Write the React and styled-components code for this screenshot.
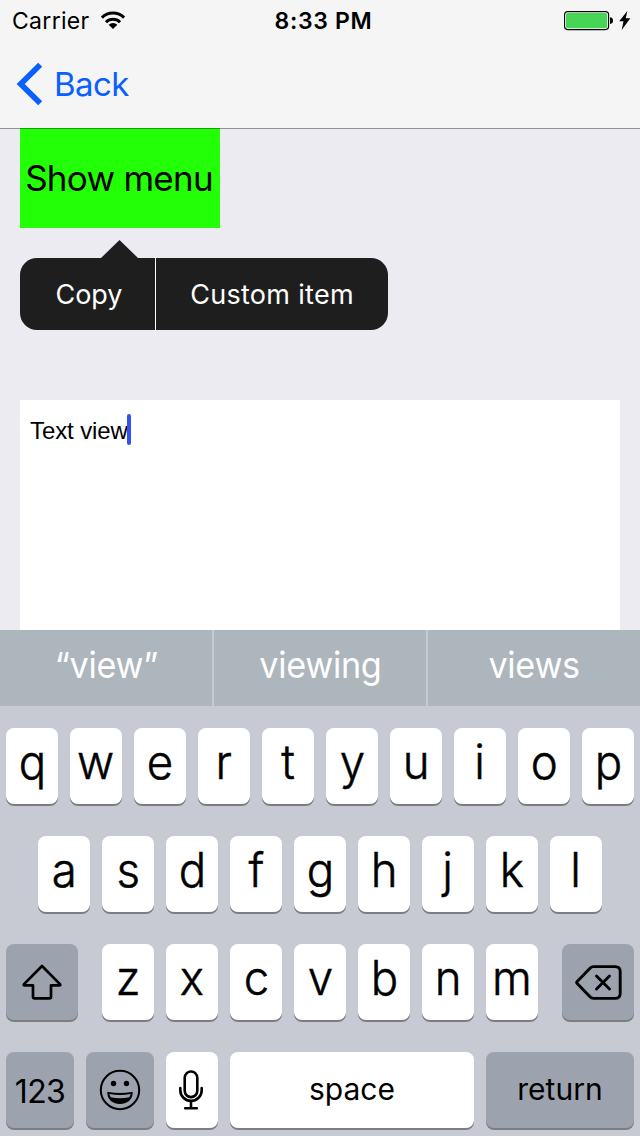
import React from "react";
import styled, { createGlobalStyle } from "styled-components";

const GlobalStyle = createGlobalStyle`
  * { box-sizing: border-box; }
  body { margin: 0; background: #ecebf1; }
`;

const Screen = styled.div`
  width: 640px;
  height: 1136px;
  display: flex;
  flex-direction: column;
  overflow: hidden;
  background: #ecebf1;
  color: #000;
  font-family: Inter, "Liberation Sans", sans-serif;
`;

const Header = styled.header`
  position: relative;
  z-index: 1;
  flex: none;
  height: 128px;
  background: #f5f5f5;
  box-shadow: 0 1px 0 rgba(0, 0, 0, 0.38);
`;

const StatusBar = styled.div`
  display: grid;
  grid-template-columns: 1fr auto 1fr;
  align-items: center;
  height: 42px;
  padding: 0 9px 0 12px;
`;

const StatusGroup = styled.div`
  display: flex;
  align-items: center;
  justify-content: ${(p) => (p.$end ? "flex-end" : "flex-start")};
  gap: ${(p) => p.$gap}px;
`;

const Label = styled.span`
  font-size: ${(p) => p.$size}px;
  font-weight: ${(p) => p.$weight || 400};
  letter-spacing: ${(p) => p.$track || 0}px;
  line-height: 1.2;
  white-space: pre;
  transform: ${(p) => (p.$narrow ? `scaleX(${p.$narrow})` : "none")};
`;

const CarrierName = styled(Label)`
  padding-top: 2px;
`;

const Clock = styled(Label)`
  padding: 2px 0 0 4px;
`;

const KeyLabel = styled(Label)`
  -webkit-text-stroke: 0.5px currentColor;
`;

const BackButton = styled.button`
  display: flex;
  align-items: center;
  gap: 11px;
  height: 84px;
  padding: 0 0 0 16px;
  border: 0;
  background: none;
  color: #0a60ff;
  font-family: inherit;
`;

const BackLabel = styled(Label)`
  padding-top: 2px;
`;

const Content = styled.main`
  flex: none;
  height: 502px;
  padding: 0 20px;
`;

const MenuTrigger = styled.div`
  display: flex;
  align-items: center;
  justify-content: center;
  width: 200px;
  height: 100px;
  padding-right: 2px;
  background: #22ff06;
`;

const Popover = styled.div`
  display: flex;
  flex-direction: column;
  align-items: flex-start;
  margin-top: 12px;
`;

const Arrow = styled.svg`
  display: block;
  margin-left: 81px;
`;

const MenuItems = styled.div`
  display: flex;
  width: 368px;
  height: 72px;
  border-radius: 17px;
  background: #1e1e1e;
  color: #fff;
  overflow: hidden;
`;

const MenuItem = styled.div`
  display: flex;
  align-items: center;
  justify-content: center;
  flex: ${(p) => (p.$width ? `0 0 ${p.$width}px` : "1")};
  padding-top: 2px;
  padding-left: ${(p) => p.$inset || 0}px;

  & + & { border-left: 1px solid #fff; }
`;

const TextView = styled.div`
  display: flex;
  align-items: flex-start;
  height: 230px;
  margin-top: 70px;
  padding: 14px 10px;
  background: #fff;
  font-family: "Liberation Sans", Arial, sans-serif;
`;

const TextLine = styled.span`
  font-size: 24px;
  line-height: 33px;
  letter-spacing: -0.1px;
`;

const Caret = styled.span`
  width: 4px;
  height: 31px;
  margin-left: -1px;
  border-radius: 2px;
  background: #3550ee;
`;

const Keyboard = styled.section`
  flex: none;
  height: 506px;
  background: #c8cad3;
`;

const Predictions = styled.div`
  display: grid;
  grid-template-columns: repeat(3, 212px);
  gap: 2px;
  height: 76px;
`;

const Prediction = styled.div`
  display: flex;
  align-items: center;
  justify-content: center;
  padding-bottom: 5px;
  background: #adb5bd;
  color: #fff;
`;

const Keys = styled.div`
  display: flex;
  flex-direction: column;
  gap: 32px;
  padding: 22px 6px 0;
`;

const KeyRow = styled.div`
  display: flex;
  justify-content: center;
  gap: 12px;
`;

const LetterGroup = styled.div`
  display: flex;
  gap: 12px;
  margin: 0 12px;
`;

const Key = styled.div`
  display: flex;
  align-items: center;
  justify-content: center;
  flex: none;
  width: ${(p) => p.$width || 52}px;
  height: 76px;
  padding-bottom: ${(p) => p.$lift || 0}px;
  padding-top: ${(p) => p.$drop || 0}px;
  border-radius: 8px;
  background: ${(p) => (p.$dark ? "#9ca3af" : "#fff")};
  box-shadow: 0 2px 0 #7b7d82;
`;

const MicKey = styled(Key)`
  padding-right: 2px;
`;

const Letter = ({ children }) => (
  <Key $lift={8}>
    <KeyLabel $size={48} $weight={300} $narrow={0.95}>{children}</KeyLabel>
  </Key>
);

const Suggestion = ({ children }) => (
  <Prediction>
    <Label $size={36} $track={-0.3} $narrow={0.95}>{children}</Label>
  </Prediction>
);

const WifiIcon = () => (
  <svg width="26" height="20" viewBox="0 0 26 20" fill="none" stroke="#000" strokeWidth="3">
    <path d="M1.900 6.600a16 16 0 0 1 22.200 0" />
    <path d="M6 11.200a10 10 0 0 1 14 0" />
    <path d="M8.700 13.700a6.100 6.100 0 0 1 8.600 0L13 18z" fill="#000" stroke="none" />
  </svg>
);

const BatteryIcon = () => (
  <svg width="50" height="20" viewBox="0 0 50 20">
    <rect x="0.6" y="0.6" width="44" height="18" rx="3" fill="#fff" stroke="#000" strokeWidth="1.1" />
    <rect x="2" y="2" width="41.2" height="15.2" rx="1.6" fill="#46d554" />
    <path d="M46 6.2q3 .2 3 3.4t-3 3.4z" />
  </svg>
);

const BoltIcon = () => (
  <svg width="12" height="20" viewBox="0 0 12 20">
    <path d="M8.300 0 .2 10.200h4.300L2.700 18.900 11.300 7.200H6.800z" />
  </svg>
);

const ChevronIcon = () => (
  <svg width="27" height="44" viewBox="0 0 27 44" fill="none" stroke="currentColor" strokeWidth="5.700">
    <path d="M24.200 2.800 4.700 22 24.200 41.200" />
  </svg>
);

const ShiftIcon = () => (
  <svg width="40" height="36" viewBox="0 0 40 36" fill="none" stroke="#000" strokeWidth="2.700" strokeLinejoin="round">
    <path d="M20 2 1.800 20.400q-.4 1 .8 1H11v11.400q0 1.600 1.600 1.600h14.800q1.600 0 1.600-1.600V21.400h8.400q1.200 0 .8-1z" />
  </svg>
);

const DeleteIcon = () => (
  <svg width="47" height="35" viewBox="0 0 47 35" fill="none" stroke="#000" strokeWidth="2.900" strokeLinecap="round" strokeLinejoin="round">
    <path d="M18.500 1.600H40q5.200 0 5.200 5v21.800q0 5-5.200 5H18.500q-2 0-3.500-1.600L2.200 18.600q-1-1.100 0-2.200L15 3.200q1.500-1.600 3.500-1.600z" />
    <path d="m21.500 11 13 13m0-13-13 13" />
  </svg>
);

const EmojiIcon = () => (
  <svg width="42" height="42" viewBox="0 0 42 42">
    <circle cx="21" cy="21" r="19.200" fill="none" stroke="#000" strokeWidth="2" />
    <circle cx="14.500" cy="14.500" r="2.700" />
    <circle cx="27.500" cy="14.500" r="2.700" />
    <path d="M8.200 24q-.2-1.400 1.300-1.100 11.500 2 23 0 1.500-.3 1.300 1.100C33.200 31 28 35 21 35S8.800 31 8.200 24z" />
    <path d="M10.300 25Q21 27 31.700 25L30.300 28.200Q21 30.500 11.700 28.200z" fill="#9ca3af" />
  </svg>
);

const MicIcon = () => (
  <svg width="26" height="40" viewBox="0 0 26 40" fill="none" stroke="#000" strokeWidth="2.600" strokeLinecap="round">
    <rect x="6.700" y="1.500" width="12.600" height="25.600" rx="6.300" />
    <path d="M2.300 18v2.200a10.700 10.700 0 0 0 21.400 0V18M13 31v7M7.200 38.200h11.600" />
  </svg>
);

export default function App() {
  return (
    <Screen>
      <GlobalStyle />
      <Header>
        <StatusBar>
          <StatusGroup $gap={10}>
            <CarrierName $size={23} $track={0.3}>Carrier</CarrierName>
            <WifiIcon />
          </StatusGroup>
          <Clock $size={23} $weight={600} $track={0.7}>8:33 PM</Clock>
          <StatusGroup $end $gap={5}>
            <BatteryIcon />
            <BoltIcon />
          </StatusGroup>
        </StatusBar>
        <BackButton>
          <ChevronIcon />
          <BackLabel $size={33} $track={-0.6}>Back</BackLabel>
        </BackButton>
      </Header>

      <Content>
        <MenuTrigger>
          <Label $size={35} $track={-0.75}>Show menu</Label>
        </MenuTrigger>
        <Popover>
          <Arrow width="37" height="18" viewBox="0 0 37 18">
            <path d="M18.500 0 37 18H0z" fill="#1e1e1e" />
          </Arrow>
          <MenuItems>
            <MenuItem $width={135} $inset={3}><Label $size={27}>Copy</Label></MenuItem>
            <MenuItem><Label $size={27} $track={0.3}>Custom item</Label></MenuItem>
          </MenuItems>
        </Popover>
        <TextView>
          <TextLine>Text view</TextLine>
          <Caret />
        </TextView>
      </Content>

      <Keyboard>
        <Predictions>
          <Suggestion>“view”</Suggestion>
          <Suggestion>viewing</Suggestion>
          <Suggestion>views</Suggestion>
        </Predictions>
        <Keys>
          <KeyRow>{[..."qwertyuiop"].map((c) => <Letter key={c}>{c}</Letter>)}</KeyRow>
          <KeyRow>{[..."asdfghjkl"].map((c) => <Letter key={c}>{c}</Letter>)}</KeyRow>
          <KeyRow>
            <Key $dark $width={72}><ShiftIcon /></Key>
            <LetterGroup>{[..."zxcvbnm"].map((c) => <Letter key={c}>{c}</Letter>)}</LetterGroup>
            <Key $dark $width={72}><DeleteIcon /></Key>
          </KeyRow>
          <KeyRow>
            <Key $dark $width={68} $drop={5}><Label $size={32} $track={-0.6}>123</Label></Key>
            <Key $dark $width={68}><EmojiIcon /></Key>
            <MicKey><MicIcon /></MicKey>
            <Key $width={244} $lift={2}><Label $size={30}>space</Label></Key>
            <Key $dark $width={148} $lift={2}><Label $size={30}>return</Label></Key>
          </KeyRow>
        </Keys>
      </Keyboard>
    </Screen>
  );
}
